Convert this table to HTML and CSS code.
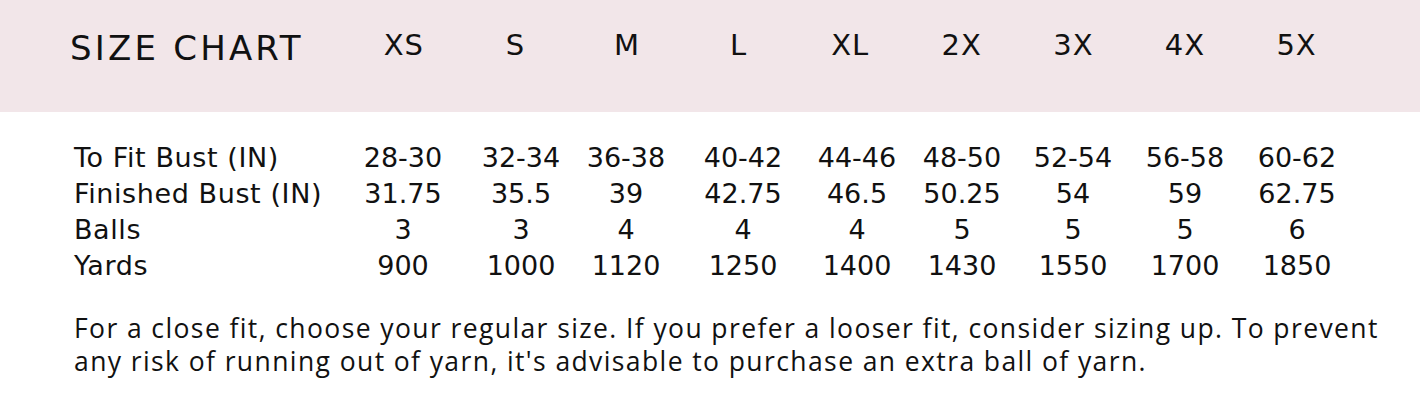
FILE: index.html
```html
<!DOCTYPE html>
<html lang="en">
<head>
<meta charset="utf-8">
<title>Size Chart</title>
<link rel="stylesheet" href="styles.css">
</head>
<body>
<div class="chart">
  <header class="band">
    <div class="title">SIZE CHART</div>
    <div class="size">XS</div>
    <div class="size">S</div>
    <div class="size">M</div>
    <div class="size">L</div>
    <div class="size">XL</div>
    <div class="size">2X</div>
    <div class="size">3X</div>
    <div class="size">4X</div>
    <div class="size">5X</div>
  </header>
  <div class="table">
    <div class="label">To Fit Bust (IN)</div>
    <div class="cell">28-30</div><div class="cell">32-34</div><div class="cell">36-38</div><div class="cell">40-42</div><div class="cell">44-46</div><div class="cell">48-50</div><div class="cell">52-54</div><div class="cell">56-58</div><div class="cell">60-62</div>
    <div class="label">Finished Bust (IN)</div>
    <div class="cell">31.75</div><div class="cell">35.5</div><div class="cell">39</div><div class="cell">42.75</div><div class="cell">46.5</div><div class="cell">50.25</div><div class="cell">54</div><div class="cell">59</div><div class="cell">62.75</div>
    <div class="label">Balls</div>
    <div class="cell">3</div><div class="cell">3</div><div class="cell">4</div><div class="cell">4</div><div class="cell">4</div><div class="cell">5</div><div class="cell">5</div><div class="cell">5</div><div class="cell">6</div>
    <div class="label">Yards</div>
    <div class="cell">900</div><div class="cell">1000</div><div class="cell">1120</div><div class="cell">1250</div><div class="cell">1400</div><div class="cell">1430</div><div class="cell">1550</div><div class="cell">1700</div><div class="cell">1850</div>
  </div>
  <p class="note">For a close fit, choose your regular size. If you prefer a looser fit, consider sizing up. To prevent any risk of running out of yarn, it's advisable to purchase an extra ball of yarn.</p>
</div>
</body>
</html>
```
FILE: styles.css
```css
html, body {
  margin: 0;
  padding: 0;
  background: #ffffff;
}
.chart {
  width: 1420px;
  height: 404px;
  color: #111111;
  font-family: "DejaVu Sans", "Noto Sans", sans-serif;
}
.band {
  box-sizing: border-box;
  height: 112px;
  background: #f2e6e9;
  display: grid;
  grid-template-columns: 274px repeat(9, 111.6px);
  padding-left: 74px;
  align-items: start;
}
.title {
  font-size: 34px;
  letter-spacing: 3.2px;
  line-height: 40px;
  padding-top: 28px;
  margin-left: -4px;
  white-space: nowrap;
}
.size {
  text-align: center;
  font-size: 29px;
  letter-spacing: 1px;
  line-height: 36px;
  padding-top: 27px;
}
.table {
  display: grid;
  grid-template-columns: 273px 112px 124px 86px 148px 80px 130px 92px 132px 92px;
  padding-left: 74px;
  margin-top: 28px;
  font-size: 27px;
  line-height: 36px;
}
.label {
  white-space: nowrap;
  letter-spacing: 0.6px;
}
.cell {
  display: flex;
  justify-content: center;
  white-space: nowrap;
}
.note {
  margin: 28px 0 0 74px;
  width: 1330px;
  font-family: "Open Sans", "Noto Sans", sans-serif;
  font-size: 26.5px;
  line-height: 33px;
  letter-spacing: 1.4px;
}
```
